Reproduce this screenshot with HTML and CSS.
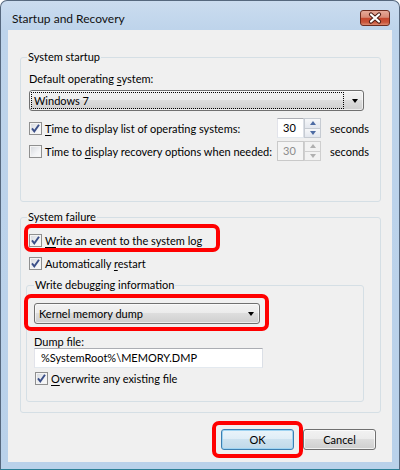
FILE: index.html
```html
<!DOCTYPE html>
<html lang="en">
<head>
  <meta charset="UTF-8">
  <meta name="viewport" content="width=device-width, initial-scale=1.0">
  <title>Startup and Recovery</title>
  <link rel="stylesheet" href="styles.css">
</head>
<body>
  <div class="window">
    <div class="titlebar">
      <span class="title">Startup and Recovery</span>
      <span class="close">
        <svg width="30" height="16" viewBox="0 0 30 16">
          <path d="M11 4.5 L19 11.5 M19 4.5 L11 11.5" stroke="#4b1c14" stroke-width="4.2" stroke-linecap="round"/>
          <path d="M11 4.5 L19 11.5 M19 4.5 L11 11.5" stroke="#fff" stroke-width="2.2" stroke-linecap="round"/>
        </svg>
      </span>
    </div>

    <div class="client">
      <fieldset class="group startup">
        <legend>System startup</legend>
        <div class="field-label">Default operating <u>s</u>ystem:</div>
        <div class="combo combo-os">
          <span class="combo-text focused">Windows 7</span>
          <span class="combo-arrow"></span>
        </div>

        <div class="row timed">
          <span class="check-label">
            <span class="cb checked"><svg viewBox="0 0 11 11"><path d="M2 5.3 L4.3 8.3 L9 1.8"/></svg></span>
            <span><u>T</u>ime to display list of operating systems:</span>
          </span>
          <span class="spin">
            <span class="spin-value">30</span>
            <span class="spin-btns"><span class="spin-up"></span><span class="spin-down"></span></span>
          </span>
          <span class="unit">seconds</span>
        </div>

        <div class="row timed second">
          <span class="check-label">
            <span class="cb"></span>
            <span>Time to <u>d</u>isplay recovery options when needed:</span>
          </span>
          <span class="spin disabled">
            <span class="spin-value">30</span>
            <span class="spin-btns"><span class="spin-up"></span><span class="spin-down"></span></span>
          </span>
          <span class="unit">seconds</span>
        </div>
      </fieldset>

      <fieldset class="group failure">
        <legend>System failure</legend>
        <div class="row first">
          <span class="cb checked"><svg viewBox="0 0 11 11"><path d="M2 5.3 L4.3 8.3 L9 1.8"/></svg></span>
          <span><u>W</u>rite an event to the system log</span>
        </div>
        <div class="row">
          <span class="cb checked"><svg viewBox="0 0 11 11"><path d="M2 5.3 L4.3 8.3 L9 1.8"/></svg></span>
          <span>Automatically <u>r</u>estart</span>
        </div>

        <fieldset class="group debug">
          <legend>Write debugging information</legend>
          <div class="combo combo-dump">
            <span class="combo-text">Kernel memory dump</span>
            <span class="combo-arrow"></span>
          </div>
          <div class="field-label dump-label">Dump file:</div>
          <div class="textbox">%SystemRoot%\MEMORY.DMP</div>
          <div class="row overwrite">
            <span class="cb checked"><svg viewBox="0 0 11 11"><path d="M2 5.3 L4.3 8.3 L9 1.8"/></svg></span>
            <span><u>O</u>verwrite any existing file</span>
          </div>
        </fieldset>
      </fieldset>

      <div class="buttons">
        <button class="btn default">OK</button>
        <button class="btn">Cancel</button>
      </div>
    </div>

    <!-- red highlight marks drawn over the dialog -->
    <div class="mark mark-log"></div>
    <div class="mark mark-dump"></div>
    <div class="mark mark-ok"></div>
  </div>
</body>
</html>
```
FILE: styles.css
```css
body {
  margin: 0;
  font-family: Lato, "Liberation Sans", sans-serif;
  font-size: 11px;
  line-height: 15px;
  color: #000;
}

.window {
  position: relative;
  width: 400px;
  height: 470px;
  box-sizing: border-box;
  padding: 0 7px 7px;
  border: 1px solid #56687e;
  border-bottom-color: #2b7f96;
  border-radius: 7px 7px 0 0;
  background: linear-gradient(to bottom, #cbdcef, #bed4eb 28px, #b9d1ea);
}

.titlebar {
  display: flex;
  justify-content: space-between;
  align-items: flex-start;
  height: 29px;
  margin: 0 -7px;
  padding: 10px 9px 0 11px;
  box-sizing: border-box;
}

.title {
  font-size: 12px;
  line-height: 15px;
  color: #111;
}

.close {
  display: block;
  width: 30px;
  height: 16px;
  margin-top: -1px;
  box-sizing: border-box;
  border: 1px solid #6d2c20;
  border-radius: 3px;
  background: linear-gradient(to bottom, #e6a999, #d88a76 45%, #c5472e 52%, #c9553b 80%, #dc8a71);
  overflow: hidden;
}

.close svg {
  display: block;
  margin: -1px;
}

.client {
  height: 432px;
  box-sizing: border-box;
  padding: 20px 11px 0 12px;
  background: #f0f0f0;
}

.group {
  margin: 0;
  padding: 7px 8px 40px;
  border: 1px solid #d5dfe5;
  border-radius: 3px;
  min-width: 0;
}

.group legend {
  padding: 0 1px;
  margin-left: -2px;
  line-height: 14px;
}

.failure {
  margin-top: 8px;
  padding-top: 8px;
  padding-bottom: 10px;
}

.debug {
  margin: 6px 8px 0 -3px;
  padding: 11px 7px 14px;
}

.debug legend {
  margin-left: 0;
}

.field-label {
  line-height: 15px;
}

.dump-label {
  margin-top: 12px;
  line-height: 12px;
}

u {
  text-decoration-thickness: 1px;
  text-underline-offset: 2px;
}

/* drop-down lists */
.combo {
  display: flex;
  align-items: center;
  height: 21px;
  box-sizing: border-box;
  border: 1px solid #707070;
  border-radius: 3px;
  background: linear-gradient(to bottom, #f2f2f2, #ebebeb 50%, #dddddd 50%, #cfcfcf);
  box-shadow: inset 0 0 0 1px rgba(255, 255, 255, 0.6);
}

.combo-os {
  width: 335px;
  margin-top: 4px;
}

.combo-dump {
  width: 226px;
}

.combo-text {
  flex: 1;
  height: 17px;
  line-height: 16px;
  margin-left: 1px;
  padding-left: 2px;
  box-sizing: border-box;
  border: 1px solid transparent;
}

.combo-text.focused {
  border: 1px dotted #000;
}

.combo-arrow {
  width: 0;
  height: 0;
  margin: 1px 5px 0 8px;
  border-left: 3.5px solid transparent;
  border-right: 3.5px solid transparent;
  border-top: 4px solid #000;
}

/* checkbox rows */
.row {
  display: flex;
  align-items: center;
  height: 17px;
  margin-top: 6px;
}

.row.first {
  margin-top: 0;
}

.row > .cb {
  margin-right: 3px;
}

.timed {
  height: 20px;
  margin-top: 7px;
}

.timed.second {
  margin-top: 3px;
}

.check-label {
  display: flex;
  align-items: center;
  gap: 3px;
  width: 248px;
}

.overwrite {
  margin-top: 2px;
  padding-left: 1px;
}

.cb {
  display: block;
  flex: none;
  width: 13px;
  height: 13px;
  box-sizing: border-box;
  border: 1px solid #8f8f8f;
  background: linear-gradient(135deg, #d4d7dc, #f2f3f5 60%, #fafafa);
  box-shadow: inset 0 0 0 1px #f4f4f4;
}

.cb svg {
  display: block;
  width: 11px;
  height: 11px;
}

.cb path {
  fill: none;
  stroke: #3b4f88;
  stroke-width: 1.9;
}

/* spin boxes */
.spin {
  display: flex;
  width: 44px;
  height: 20px;
  margin-right: 9px;
}

.spin-value {
  width: 27px;
  box-sizing: border-box;
  padding-left: 5px;
  line-height: 18px;
  border: 1px solid;
  border-color: #abadb3 #dbdfe6 #e3e9ef #e2e3ea;
  background: #fff;
}

.spin-btns {
  display: flex;
  flex-direction: column;
  width: 17px;
}

.spin-btns span {
  flex: 1;
  display: flex;
  align-items: center;
  justify-content: center;
  border: 1px solid #c6cbd2;
  background: linear-gradient(to bottom, #f6f7f9, #e3e7ee);
}

.spin-btns .spin-down {
  border-top: none;
}

.spin-up::after,
.spin-down::after {
  content: "";
  border-left: 3.5px solid transparent;
  border-right: 3.5px solid transparent;
}

.spin-up::after {
  border-bottom: 4px solid #4d6ba3;
}

.spin-down::after {
  border-top: 4px solid #4d6ba3;
}

.spin.disabled .spin-value {
  color: #8c8c8c;
  border-color: #c9c9c9;
  background: #f4f4f4;
}

.spin.disabled .spin-btns span {
  background: #f2f2f2;
  border-color: #cfcfcf;
}

.spin.disabled .spin-up::after {
  border-bottom-color: #b0b0b0;
}

.spin.disabled .spin-down::after {
  border-top-color: #b0b0b0;
}

/* text box */
.textbox {
  width: 229px;
  height: 20px;
  box-sizing: border-box;
  padding-left: 6px;
  line-height: 18px;
  border: 1px solid;
  border-color: #abadb3 #dbdfe6 #e3e9ef #e2e3ea;
  background: #fff;
}

/* push buttons */
.buttons {
  display: flex;
  justify-content: flex-end;
  gap: 9px;
  margin-top: 16px;
  padding-right: 5px;
}

.btn {
  width: 73px;
  height: 21px;
  padding: 0;
  font: inherit;
  color: #000;
  border: 1px solid #707070;
  border-radius: 3px;
  background: linear-gradient(to bottom, #f2f2f2, #ebebeb 50%, #dddddd 50%, #cfcfcf);
  box-shadow: inset 0 0 0 1px rgba(255, 255, 255, 0.7);
}

.btn.default {
  border-color: #3c7fb1;
  background: linear-gradient(to bottom, #eaf4fa, #deedf6 50%, #cde2ef 50%, #c0d9e9);
  box-shadow: inset 0 0 0 1px #9fd4f2;
}

/* red highlight marks */
.mark {
  position: absolute;
  box-sizing: border-box;
  border: 4px solid #ff0000;
  border-radius: 7px;
}

.mark-log {
  left: 23px;
  top: 223px;
  width: 196px;
  height: 28px;
}

.mark-dump {
  left: 23px;
  top: 293px;
  width: 245px;
  height: 37px;
}

.mark-ok {
  left: 211px;
  top: 420px;
  width: 91px;
  height: 37px;
}
```
